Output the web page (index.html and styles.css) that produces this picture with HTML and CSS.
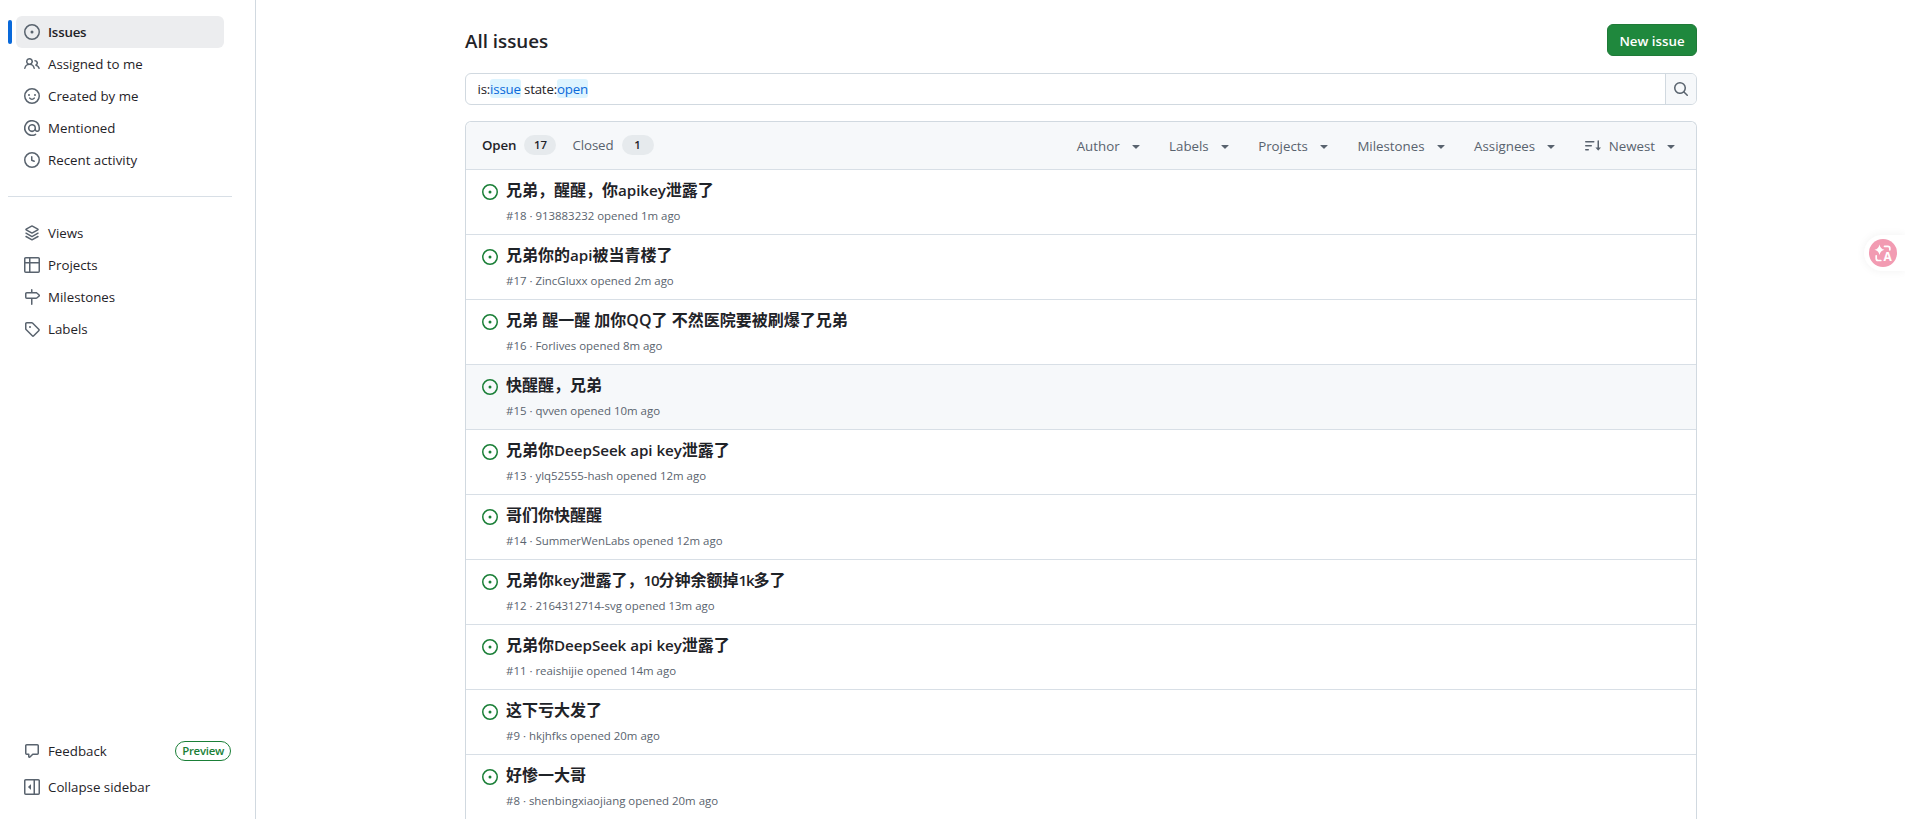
FILE: index.html
```html
<!DOCTYPE html>
<html lang="en">
<head>
    <meta charset="utf-8">
    <title>All issues</title>
    <link rel="stylesheet" href="styles.css">
</head>
<body>
    <!-- shared icons -->
    <svg class="sprite">
        <symbol id="issue" viewBox="0 0 16 16"><path d="M8 9.5a1.5 1.5 0 1 0 0-3 1.5 1.5 0 0 0 0 3Z"/><path d="M8 0a8 8 0 1 1 0 16A8 8 0 0 1 8 0ZM1.5 8a6.5 6.5 0 1 0 13 0 6.5 6.5 0 0 0-13 0Z"/></symbol>
        <symbol id="triangle" viewBox="0 0 16 16"><path d="m4.427 7.427 3.396 3.396a.25.25 0 0 0 .354 0l3.396-3.396A.25.25 0 0 0 11.396 7H4.604a.25.25 0 0 0-.177.427Z"/></symbol>
    </svg>

    <div class="layout">
        <aside class="sidebar">
            <nav class="nav">
                <a class="nav-item active">
                    <svg class="icon"><use href="#issue"/></svg>
                    <span>Issues</span>
                </a>
                <a class="nav-item">
                    <svg class="icon" viewBox="0 0 16 16"><path d="M2 5.5a3.5 3.5 0 1 1 5.898 2.549 5.508 5.508 0 0 1 3.034 4.084.75.75 0 1 1-1.482.235 4 4 0 0 0-7.9 0 .75.75 0 0 1-1.482-.236A5.507 5.507 0 0 1 3.102 8.05 3.493 3.493 0 0 1 2 5.5ZM11 4a3.001 3.001 0 0 1 2.22 5.018 5.01 5.01 0 0 1 2.56 3.012.749.749 0 0 1-.885.954.752.752 0 0 1-.549-.514 3.507 3.507 0 0 0-2.522-2.372.75.75 0 0 1-.574-.73v-.352a.75.75 0 0 1 .416-.672A1.5 1.5 0 0 0 11 5.5.75.75 0 0 1 11 4Zm-5.5-.5a2 2 0 1 0-.001 3.999A2 2 0 0 0 5.5 3.5Z"/></svg>
                    <span>Assigned to me</span>
                </a>
                <a class="nav-item">
                    <svg class="icon" viewBox="0 0 16 16"><path d="M8 0a8 8 0 1 1 0 16A8 8 0 0 1 8 0ZM1.5 8a6.5 6.5 0 1 0 13 0 6.5 6.5 0 0 0-13 0ZM5 8a1 1 0 1 0 0-2 1 1 0 0 0 0 2Zm6 0a1 1 0 1 0 0-2 1 1 0 0 0 0 2Z"/><path class="line" d="M5.75 10.1c.5.7 1.25 1.15 2.25 1.15s1.75-.45 2.25-1.15"/></svg>
                    <span>Created by me</span>
                </a>
                <a class="nav-item">
                    <svg class="icon" viewBox="0 0 16 16"><path d="M4.75 2.37a6.501 6.501 0 0 0 6.5 11.26.75.75 0 0 1 .75 1.298A7.999 7.999 0 0 1 .989 4.148 8 8 0 0 1 16 7.75v1.5a2.75 2.75 0 0 1-5.072 1.475 3.999 3.999 0 0 1-6.65-4.19A4 4 0 0 1 12 8v1.25a1.25 1.25 0 0 0 2.5 0V7.867a6.5 6.5 0 0 0-9.75-5.496ZM10.5 8a2.5 2.5 0 1 0-5 0 2.5 2.5 0 0 0 5 0Z"/></svg>
                    <span>Mentioned</span>
                </a>
                <a class="nav-item">
                    <svg class="icon" viewBox="0 0 16 16"><path d="M8 0a8 8 0 1 1 0 16A8 8 0 0 1 8 0ZM1.5 8a6.5 6.5 0 1 0 13 0 6.5 6.5 0 0 0-13 0Zm7-3.25v2.992l2.028.812a.75.75 0 0 1-.557 1.392l-2.5-1A.751.751 0 0 1 7 8.25v-3.5a.75.75 0 0 1 1.5 0Z"/></svg>
                    <span>Recent activity</span>
                </a>
            </nav>
            <hr class="divider">
            <nav class="nav">
                <a class="nav-item">
                    <svg class="icon" viewBox="0 0 16 16"><path class="line" d="M7.6 1.1 2.2 4.1c-.35.2-.35.6 0 .8l5.4 3c.25.13.55.13.8 0l5.4-3c.35-.2.35-.6 0-.8l-5.4-3a.85.85 0 0 0-.8 0ZM2 8.2l5.6 3.1c.25.13.55.13.8 0L14 8.2M2 11.5l5.6 3.1c.25.13.55.13.8 0l5.6-3.1"/></svg>
                    <span>Views</span>
                </a>
                <a class="nav-item">
                    <svg class="icon" viewBox="0 0 16 16"><path d="M0 1.75C0 .784.784 0 1.75 0h12.5C15.216 0 16 .784 16 1.75v12.5A1.75 1.75 0 0 1 14.25 16H1.75A1.75 1.75 0 0 1 0 14.25ZM6.5 6.5v8h7.75a.25.25 0 0 0 .25-.25V6.5Zm8-1.5V1.75a.25.25 0 0 0-.25-.25H6.5V5Zm-13 1.5v7.75c0 .138.112.25.25.25H5v-8ZM5 5V1.5H1.75a.25.25 0 0 0-.25.25V5Z"/></svg>
                    <span>Projects</span>
                </a>
                <a class="nav-item">
                    <svg class="icon" viewBox="0 0 16 16"><path d="M7.75 0a.75.75 0 0 1 .75.75V3h3.634c.414 0 .814.147 1.13.414l2.07 1.75a1.75 1.75 0 0 1 0 2.672l-2.07 1.75a1.75 1.75 0 0 1-1.13.414H8.5v5.25a.75.75 0 0 1-1.5 0V10H2.75A1.75 1.75 0 0 1 1 8.25v-3.5C1 3.784 1.784 3 2.75 3H7V.75A.75.75 0 0 1 7.75 0Zm4.384 8.5a.25.25 0 0 0 .161-.06l2.07-1.75a.248.248 0 0 0 0-.38l-2.07-1.75a.25.25 0 0 0-.161-.06H2.75a.25.25 0 0 0-.25.25v3.5c0 .138.112.25.25.25h9.384Z"/></svg>
                    <span>Milestones</span>
                </a>
                <a class="nav-item">
                    <svg class="icon" viewBox="0 0 16 16"><path d="M1 7.775V2.75C1 1.784 1.784 1 2.75 1h5.025c.464 0 .91.184 1.238.513l6.25 6.25a1.75 1.75 0 0 1 0 2.474l-5.026 5.026a1.75 1.75 0 0 1-2.474 0l-6.25-6.25A1.752 1.752 0 0 1 1 7.775Zm1.5 0c0 .066.026.13.073.177l6.25 6.25a.25.25 0 0 0 .354 0l5.025-5.025a.25.25 0 0 0 0-.354l-6.25-6.25a.25.25 0 0 0-.177-.073H2.75a.25.25 0 0 0-.25.25ZM6 5a1 1 0 1 1 0 2 1 1 0 0 1 0-2Z"/></svg>
                    <span>Labels</span>
                </a>
            </nav>
            <div class="sidebar-footer">
                <a class="nav-item">
                    <svg class="icon" viewBox="0 0 16 16"><path d="M1 2.75C1 1.784 1.784 1 2.75 1h10.5c.966 0 1.75.784 1.75 1.75v7.5A1.75 1.75 0 0 1 13.25 12H9.06l-2.573 2.573A1.458 1.458 0 0 1 4 13.543V12H2.75A1.75 1.75 0 0 1 1 10.25Zm1.75-.25a.25.25 0 0 0-.25.25v7.5c0 .138.112.25.25.25h2a.75.75 0 0 1 .75.75v2.19l2.72-2.72a.749.749 0 0 1 .53-.22h4.5a.25.25 0 0 0 .25-.25v-7.5a.25.25 0 0 0-.25-.25Z"/></svg>
                    <span>Feedback</span>
                    <span class="preview">Preview</span>
                </a>
                <a class="nav-item">
                    <svg class="icon" viewBox="0 0 16 16"><path d="m4.177 7.823 2.396-2.396A.25.25 0 0 1 7 5.604v4.792a.25.25 0 0 1-.427.177L4.177 8.177a.25.25 0 0 1 0-.354Z"/><path d="M0 1.75C0 .784.784 0 1.75 0h12.5C15.216 0 16 .784 16 1.75v12.5A1.75 1.75 0 0 1 14.25 16H1.75A1.75 1.75 0 0 1 0 14.25Zm1.75-.25a.25.25 0 0 0-.25.25v12.5c0 .138.112.25.25.25H9.5v-13Zm12.5 13a.25.25 0 0 0 .25-.25V1.75a.25.25 0 0 0-.25-.25H11v13Z"/></svg>
                    <span>Collapse sidebar</span>
                </a>
            </div>
        </aside>

        <main class="main">
            <div class="container">
                <div class="page-header">
                    <h1>All issues</h1>
                    <button class="new-issue">New issue</button>
                </div>

                <div class="search">
                    <div class="search-input">is:<span class="token">issue</span>&nbsp;state:<span class="token">open</span></div>
                    <button class="search-button">
                        <svg class="icon" viewBox="0 0 16 16"><path d="M10.68 11.74a6 6 0 0 1-7.922-8.982 6 6 0 0 1 8.982 7.922l3.04 3.04a.749.749 0 0 1-.326 1.275.749.749 0 0 1-.734-.215ZM11.5 7a4.499 4.499 0 1 0-8.997 0A4.499 4.499 0 0 0 11.5 7Z"/></svg>
                    </button>
                </div>

                <div class="list">
                    <div class="list-header">
                        <div class="tabs">
                            <a class="tab selected">Open <span class="counter">17</span></a>
                            <a class="tab">Closed <span class="counter">1</span></a>
                        </div>
                        <div class="filters">
                            <a class="filter"><span>Author</span><svg class="icon"><use href="#triangle"/></svg></a>
                            <a class="filter"><span>Labels</span><svg class="icon"><use href="#triangle"/></svg></a>
                            <a class="filter"><span>Projects</span><svg class="icon"><use href="#triangle"/></svg></a>
                            <a class="filter"><span>Milestones</span><svg class="icon"><use href="#triangle"/></svg></a>
                            <a class="filter"><span>Assignees</span><svg class="icon"><use href="#triangle"/></svg></a>
                            <a class="filter"><svg class="icon" viewBox="0 0 16 16"><path class="line" d="M.75 3.75h8M.75 7.75h5.5M.75 11.75h2.5M13.25 3v8"/><path d="M10.4 9.5h5.7l-2.5 2.85a.47.47 0 0 1-.7 0Z"/></svg><span>Newest</span><svg class="icon"><use href="#triangle"/></svg></a>
                        </div>
                    </div>

                    <div class="issue">
                        <svg class="icon"><use href="#issue"/></svg>
                        <div>
                            <h3>兄弟，醒醒，你<span class="latin">apikey</span>泄露了</h3>
                            <p>#18 · 913883232 opened 1m ago</p>
                        </div>
                    </div>
                    <div class="issue">
                        <svg class="icon"><use href="#issue"/></svg>
                        <div>
                            <h3>兄弟你的<span class="latin">api</span>被当青楼了</h3>
                            <p>#17 · ZincGluxx opened 2m ago</p>
                        </div>
                    </div>
                    <div class="issue">
                        <svg class="icon"><use href="#issue"/></svg>
                        <div>
                            <h3>兄弟 醒一醒 加你QQ了 不然医院要被刷爆了兄弟</h3>
                            <p>#16 · Forlives opened 8m ago</p>
                        </div>
                    </div>
                    <div class="issue hovered">
                        <svg class="icon"><use href="#issue"/></svg>
                        <div>
                            <h3>快醒醒，兄弟</h3>
                            <p>#15 · qvven opened 10m ago</p>
                        </div>
                    </div>
                    <div class="issue">
                        <svg class="icon"><use href="#issue"/></svg>
                        <div>
                            <h3>兄弟你<span class="latin">DeepSeek api key</span>泄露了</h3>
                            <p>#13 · ylq52555-hash opened 12m ago</p>
                        </div>
                    </div>
                    <div class="issue">
                        <svg class="icon"><use href="#issue"/></svg>
                        <div>
                            <h3>哥们你快醒醒</h3>
                            <p>#14 · SummerWenLabs opened 12m ago</p>
                        </div>
                    </div>
                    <div class="issue">
                        <svg class="icon"><use href="#issue"/></svg>
                        <div>
                            <h3>兄弟你<span class="latin">key</span>泄露了，<span class="latin digits">10</span>分钟余额掉<span class="latin digits">1k</span>多了</h3>
                            <p>#12 · 2164312714-svg opened 13m ago</p>
                        </div>
                    </div>
                    <div class="issue">
                        <svg class="icon"><use href="#issue"/></svg>
                        <div>
                            <h3>兄弟你<span class="latin">DeepSeek api key</span>泄露了</h3>
                            <p>#11 · reaishijie opened 14m ago</p>
                        </div>
                    </div>
                    <div class="issue">
                        <svg class="icon"><use href="#issue"/></svg>
                        <div>
                            <h3>这下亏大发了</h3>
                            <p>#9 · hkjhfks opened 20m ago</p>
                        </div>
                    </div>
                    <div class="issue">
                        <svg class="icon"><use href="#issue"/></svg>
                        <div>
                            <h3>好惨一大哥</h3>
                            <p>#8 · shenbingxiaojiang opened 20m ago</p>
                        </div>
                    </div>
                </div>
            </div>
        </main>
    </div>

    <!-- floating translate button -->
    <div class="translate">
        <svg width="28" height="28" viewBox="0 0 28 28">
            <circle cx="14" cy="14" r="14" fill="#f29bb2"/>
            <path fill="#fff" d="M10.5 5.5q.8 4.4 5 5.3-4.2.9-5 5.3-.8-4.4-5-5.3 4.2-.9 5-5.3Z"/>
            <path fill="none" stroke="#fff" stroke-width="1.7" stroke-linecap="round" d="M15.5 7.3h3.3a2 2 0 0 1 2 2v1.5M7.2 16.8v2.7a2 2 0 0 0 2 2h2.6"/>
            <text class="translate-letter" x="18.7" y="22.3" text-anchor="middle">A</text>
        </svg>
    </div>
</body>
</html>
```
FILE: styles.css
```css
* {
    box-sizing: border-box;
}

body {
    margin: 0;
    height: 100vh;
    overflow: hidden;
    font-family: "Open Sans", "Noto Sans CJK SC", sans-serif;
    font-size: 13.3px;
    line-height: 20px;
    color: #1f2328;
    background: #fff;
}

h1, h3, p {
    margin: 0;
}

button {
    font: inherit;
}

.sprite {
    display: none;
}

.icon {
    width: 16px;
    height: 16px;
    flex: none;
    fill: #59636e;
}

.line {
    fill: none;
    stroke: #59636e;
    stroke-width: 1.5;
    stroke-linecap: round;
    stroke-linejoin: round;
}

.layout {
    display: flex;
    height: 100%;
}

/* sidebar */
.sidebar {
    display: flex;
    flex-direction: column;
    width: 256px;
    flex: none;
    padding: 16px 0;
    border-right: 1px solid #d1d9e0;
}

.nav {
    padding: 0 31px 0 16px;
}

.nav-item {
    position: relative;
    display: flex;
    align-items: center;
    gap: 8px;
    height: 32px;
    padding: 0 8px;
    border-radius: 6px;
}

.nav-item.active {
    background: #ecedef;
    font-weight: 600;
    letter-spacing: -0.2px;
}

.nav-item.active::before {
    content: "";
    position: absolute;
    left: -8px;
    top: 4px;
    width: 4px;
    height: 24px;
    border-radius: 6px;
    background: #0969da;
}

.divider {
    width: 224px;
    height: 1px;
    margin: 20px 0 20px 8px;
    border: 0;
    background: #d8dfe6;
}

.sidebar-footer {
    display: flex;
    flex-direction: column;
    gap: 4px;
    margin-top: auto;
    padding: 0 16px;
}

.preview {
    margin-left: auto;
    height: 20px;
    padding: 0 6px;
    border: 1px solid #1a7f37;
    border-radius: 10px;
    font-size: 11.4px;
    font-weight: 600;
    line-height: 18px;
    letter-spacing: -0.25px;
    color: #1a7f37;
}

/* main column */
.main {
    flex: 1;
    padding: 24px 208px 0 209px;
}

.page-header {
    display: flex;
    align-items: center;
    justify-content: space-between;
    height: 32px;
}

h1 {
    padding-top: 1px;
    font-size: 18.8px;
    font-weight: 600;
    line-height: 32px;
}

.new-issue {
    width: 90px;
    height: 32px;
    padding: 1px 0 0;
    border: 1px solid #1f7a38;
    border-radius: 6px;
    background: #1f883d;
    font-weight: 600;
    color: #fff;
}

.search {
    display: flex;
    height: 32px;
    margin-top: 17px;
    border: 1px solid #d1d9e0;
    border-radius: 6px;
    overflow: hidden;
}

.search-input {
    flex: 1;
    display: flex;
    align-items: center;
    padding: 0 0 1px 11.5px;
    letter-spacing: -0.2px;
}

.token {
    height: 19px;
    line-height: 20px;
    border-radius: 3px;
    background: #ddf4ff;
    color: #0969da;
}

.search-button {
    display: flex;
    align-items: center;
    justify-content: center;
    width: 31px;
    padding: 0;
    border: 0;
    border-left: 1px solid #d1d9e0;
    background: #f6f8fa;
}

/* issue list, runs on below the fold */
.list {
    margin-top: 16px;
    border: 1px solid #d1d9e0;
    border-bottom: 0;
    border-radius: 6px 6px 0 0;
}

.list-header {
    display: flex;
    align-items: center;
    justify-content: space-between;
    height: 47px;
    padding: 0 5px 0 16px;
    border-radius: 6px 6px 0 0;
    background: #f6f8fa;
    color: #59636e;
}

.tabs {
    display: flex;
    gap: 16px;
    padding-bottom: 1px;
    letter-spacing: -0.1px;
}

.tab {
    display: flex;
    align-items: center;
    gap: 8px;
}

.tab.selected {
    font-weight: 600;
    color: #1f2328;
}

.counter {
    width: 32px;
    height: 20px;
    border-radius: 10px;
    background: #e6eaed;
    font-size: 11.4px;
    font-weight: 600;
    text-align: center;
    color: #1f2328;
}

.filters {
    display: flex;
    gap: 1.5px;
}

.filter {
    display: flex;
    align-items: center;
    gap: 8px;
    padding: 0 12px;
}

.issue {
    display: flex;
    gap: 8px;
    height: 65px;
    padding: 8px 16px 0;
    border-top: 1px solid #d8dfe6;
}

.issue.hovered {
    background: #f6f8fa;
}

.issue .icon {
    margin-top: 6px;
    fill: #1a7f37;
}

.issue h3 {
    height: 25px;
    font-size: 16px;
    font-weight: 600;
    line-height: 25px;
}

.latin {
    font-size: 15.2px;
    letter-spacing: -0.05px;
}

.digits {
    letter-spacing: -1.2px;
}

.issue p {
    margin-top: 3px;
    font-size: 11.45px;
    line-height: 20px;
    color: #59636e;
}

/* pinned to the right edge, over the page */
.translate {
    position: absolute;
    top: 235px;
    right: 0;
    width: 41px;
    height: 36px;
    padding: 4px 0 0 5px;
    border-radius: 18px 0 0 18px;
    background: #fff;
    box-shadow: 0 0 10px rgba(0, 0, 0, 0.06);
}

.translate-letter {
    font-size: 12px;
    font-weight: 700;
    fill: #fff;
}
```
